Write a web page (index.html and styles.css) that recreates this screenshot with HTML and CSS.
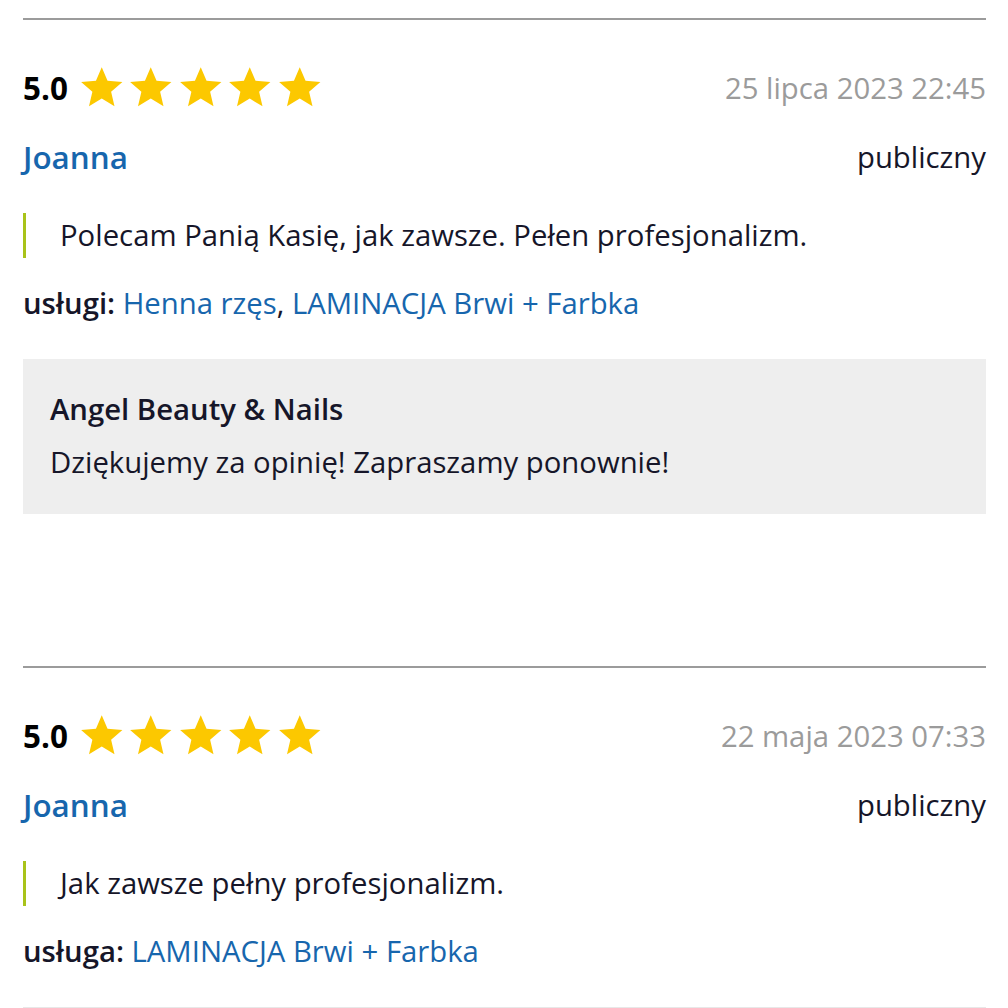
FILE: index.html
```html
<!DOCTYPE html>
<html lang="pl">
<head>
<meta charset="utf-8">
<link rel="stylesheet" href="styles.css">
</head>
<body>
<div class="list">
  <article class="review">
    <div class="row rating-row">
      <div class="rating">
        <span class="score">5.0</span>
        <span class="stars">
          <svg class="star" viewBox="0 0 24 24"><path d="M12 17.27L18.18 21l-1.64-7.03L22 9.24l-7.19-.61L12 2 9.19 8.63 2 9.24l5.46 4.73L5.82 21z"/></svg>
          <svg class="star" viewBox="0 0 24 24"><path d="M12 17.27L18.18 21l-1.64-7.03L22 9.24l-7.19-.61L12 2 9.19 8.63 2 9.24l5.46 4.73L5.82 21z"/></svg>
          <svg class="star" viewBox="0 0 24 24"><path d="M12 17.27L18.18 21l-1.64-7.03L22 9.24l-7.19-.61L12 2 9.19 8.63 2 9.24l5.46 4.73L5.82 21z"/></svg>
          <svg class="star" viewBox="0 0 24 24"><path d="M12 17.27L18.18 21l-1.64-7.03L22 9.24l-7.19-.61L12 2 9.19 8.63 2 9.24l5.46 4.73L5.82 21z"/></svg>
          <svg class="star" viewBox="0 0 24 24"><path d="M12 17.27L18.18 21l-1.64-7.03L22 9.24l-7.19-.61L12 2 9.19 8.63 2 9.24l5.46 4.73L5.82 21z"/></svg>
        </span>
      </div>
      <span class="date">25 lipca 2023 22:45</span>
    </div>
    <div class="row author-row">
      <a class="author">Joanna</a>
      <span class="visibility">publiczny</span>
    </div>
    <blockquote class="quote">Polecam Panią Kasię, jak zawsze. Pełen profesjonalizm.</blockquote>
    <p class="services"><strong>usługi:</strong> <a class="link">Henna rzęs</a>, <a class="link">LAMINACJA Brwi + Farbka</a></p>
    <div class="reply">
      <div class="reply-title">Angel Beauty &amp; Nails</div>
      <div class="reply-text">Dziękujemy za opinię! Zapraszamy ponownie!</div>
    </div>
  </article>

  <article class="review review-last">
    <div class="row rating-row">
      <div class="rating">
        <span class="score">5.0</span>
        <span class="stars">
          <svg class="star" viewBox="0 0 24 24"><path d="M12 17.27L18.18 21l-1.64-7.03L22 9.24l-7.19-.61L12 2 9.19 8.63 2 9.24l5.46 4.73L5.82 21z"/></svg>
          <svg class="star" viewBox="0 0 24 24"><path d="M12 17.27L18.18 21l-1.64-7.03L22 9.24l-7.19-.61L12 2 9.19 8.63 2 9.24l5.46 4.73L5.82 21z"/></svg>
          <svg class="star" viewBox="0 0 24 24"><path d="M12 17.27L18.18 21l-1.64-7.03L22 9.24l-7.19-.61L12 2 9.19 8.63 2 9.24l5.46 4.73L5.82 21z"/></svg>
          <svg class="star" viewBox="0 0 24 24"><path d="M12 17.27L18.18 21l-1.64-7.03L22 9.24l-7.19-.61L12 2 9.19 8.63 2 9.24l5.46 4.73L5.82 21z"/></svg>
          <svg class="star" viewBox="0 0 24 24"><path d="M12 17.27L18.18 21l-1.64-7.03L22 9.24l-7.19-.61L12 2 9.19 8.63 2 9.24l5.46 4.73L5.82 21z"/></svg>
        </span>
      </div>
      <span class="date">22 maja 2023 07:33</span>
    </div>
    <div class="row author-row">
      <a class="author">Joanna</a>
      <span class="visibility">publiczny</span>
    </div>
    <blockquote class="quote">Jak zawsze pełny profesjonalizm.</blockquote>
    <p class="services"><strong>usługa:</strong> <a class="link">LAMINACJA Brwi + Farbka</a></p>
  </article>
</div>
</body>
</html>
```

FILE: styles.css
```css
* { box-sizing: border-box; }

html, body {
  margin: 0;
  padding: 0;
  background: #ffffff;
}

body {
  font-family: "Open Sans", "Noto Sans", sans-serif;
  color: #161629;
  font-size: 29.3px;
  overflow: hidden;
}

.list {
  padding: 18px 22px 0 23px;
}

.review {
  border-top: 2px solid #9b9b9b;
  padding-top: 46px;
  padding-bottom: 152px;
}

.review-last {
  border-bottom: 1px solid #e8e8e8;
  padding-bottom: 34px;
  margin-bottom: 40px;
}

.row {
  display: flex;
  justify-content: space-between;
  align-items: center;
}

.rating-row {
  height: 44px;
}

.rating {
  display: flex;
  align-items: center;
}

.score {
  font-size: 31.4px;
  font-weight: 700;
  color: #000000;
  line-height: 44px;
  margin-right: 9px;
}

.stars {
  display: flex;
  align-items: center;
}

.star {
  width: 49.5px;
  height: 49.5px;
  fill: #fcc800;
  display: block;
}

.date {
  color: #9b9b9b;
  line-height: 44px;
}

.author-row {
  margin-top: 25px;
  height: 44px;
}

.author {
  color: #1766ad;
  font-size: 31.4px;
  font-weight: 600;
  line-height: 44px;
}

.visibility {
  line-height: 44px;
}

.quote {
  margin: 34px 0 0 0;
  border-left: 3px solid #a9c31a;
  padding-left: 34px;
  line-height: 45px;
}

.services {
  margin: 23px 0 0 0;
  line-height: 44px;
}

.services strong {
  font-weight: 600;
}

.link {
  color: #1766ad;
}

.reply {
  margin-top: 34px;
  background: #eeeeee;
  padding: 28px 27px 30px 27px;
}

.reply-title {
  font-weight: 600;
  line-height: 44px;
}

.reply-text {
  line-height: 44px;
  margin-top: 9px;
}
```
